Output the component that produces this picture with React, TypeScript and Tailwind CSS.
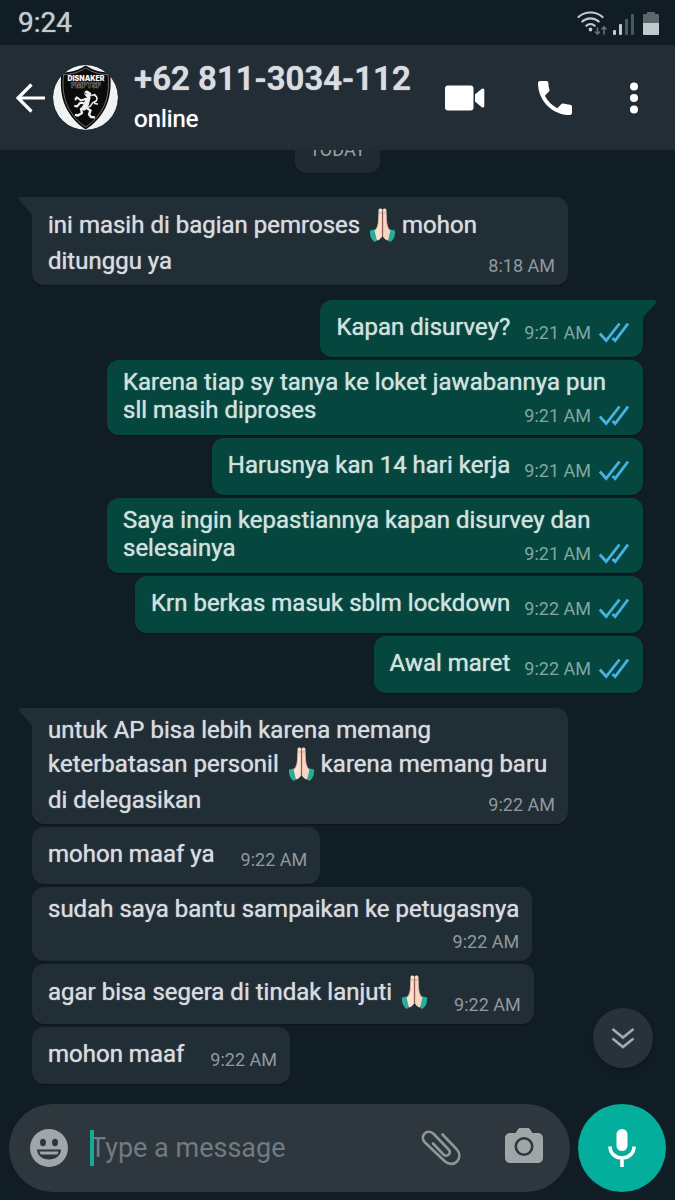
import React, { useState } from 'react';

interface Message {
    id: number;
    text: string;
    time: string;
    mine?: boolean;
    tail?: boolean;
    layout: 'single' | 'overlap' | 'stacked' | 'inline';
}

const groups: Message[][] = [
    [
        { id: 1, text: 'ini masih di bagian pemroses 🙏🏻 mohon\nditunggu ya', time: '8:18 AM', tail: true, layout: 'overlap' },
    ],
    [
        { id: 2, text: 'Kapan disurvey?', time: '9:21 AM', mine: true, tail: true, layout: 'single' },
        { id: 3, text: 'Karena tiap sy tanya ke loket jawabannya pun\nsll masih diproses', time: '9:21 AM', mine: true, layout: 'overlap' },
        { id: 4, text: 'Harusnya kan 14 hari kerja', time: '9:21 AM', mine: true, layout: 'single' },
        { id: 5, text: 'Saya ingin kepastiannya kapan disurvey dan\nselesainya', time: '9:21 AM', mine: true, layout: 'overlap' },
        { id: 6, text: 'Krn berkas masuk sblm lockdown', time: '9:22 AM', mine: true, layout: 'single' },
        { id: 7, text: 'Awal maret', time: '9:22 AM', mine: true, layout: 'single' },
    ],
    [
        { id: 8, text: 'untuk AP bisa lebih karena memang\nketerbatasan personil 🙏🏻 karena memang baru\ndi delegasikan', time: '9:22 AM', tail: true, layout: 'overlap' },
        { id: 9, text: 'mohon maaf ya', time: '9:22 AM', layout: 'single' },
        { id: 10, text: 'sudah saya bantu sampaikan ke petugasnya', time: '9:22 AM', layout: 'stacked' },
        { id: 11, text: 'agar bisa segera di tindak lanjuti 🙏🏻', time: '9:22 AM', layout: 'inline' },
        { id: 12, text: 'mohon maaf', time: '9:22 AM', layout: 'single' },
    ],
];

const layouts = {
    single: 'flex items-end py-[13px]',
    inline: 'flex items-end py-2',
    overlap: 'grid w-full py-2',
    stacked: 'flex flex-col py-2',
};

function PrayingHands() {
    return (
        <svg role="img" aria-label="🙏🏻" viewBox="0 0 30 42" className="inline-block h-[42px] w-[30px] align-[-14px]">
            <path d="M4 25.500l6.500-1.500 3 9L9 37c-3.500-2-5.500-6-5-11.500z" fill="#27ae98" />
            <path d="M29 25.500l-6.500-1.500-3 9L24 37c3.500-2 5.500-6 5-11.500z" fill="#27ae98" />
            <path d="M9 27l3.500 7.500M24 27l-3.500 7.500" stroke="#0c7a6b" strokeWidth="1.400" />
            <path d="M12.600 5c0-2 3.600-2 3.700 0v26c-1.300 2.500-3 4-5.300 4.500L8.500 26c2.500-2.500 3.600-6 3.700-10.500z" fill="#fbdfd0" />
            <path d="M20.400 5c0-2-3.600-2-3.700 0v26c1.300 2.500 3 4 5.300 4.500l2.500-9.500c-2.500-2.500-3.600-6-3.700-10.500z" fill="#f8d6c5" />
            <path d="M16.500 6v25" stroke="#96604f" strokeWidth="1.300" />
            <path d="M12.400 16c-.3 3.500-1 6-2.500 8.500M20.600 16c.3 3.500 1 6 2.500 8.500M12.700 8h3.200M17.100 8h3.200" stroke="#cf9b87" strokeWidth=".8" fill="none" />
        </svg>
    );
}

function MessageText({ text }: { text: string }) {
    return (
        <>
            {text.split('\n').map((line) => (
                <span key={line} className="block w-fit">
                    {line.split('🙏🏻').map((part, index) => (
                        <React.Fragment key={index}>
                            {index > 0 && <PrayingHands />}
                            {part}
                        </React.Fragment>
                    ))}
                </span>
            ))}
        </>
    );
}

function Ticks() {
    return (
        <svg viewBox="0 0 30 22" className="h-[22px] w-[30px]" fill="none" stroke="#45b3e0" strokeWidth="2.800">
            <path d="M.8 11.500l6.400 7L20.500 1.500" />
            <path d="M13.500 16l2.700 2.700L29 1.500" />
        </svg>
    );
}

function Bubble({ message }: { message: Message }) {
    const { text, time, mine, tail, layout } = message;
    const color = mine ? 'self-end bg-[#05473f] pr-[14px] text-[#d0e1de]' : 'self-start bg-[#222e35] pr-[13px] text-[#d6dbdf]';
    const corner = !tail ? '' : mine ? 'rounded-tr-none' : 'rounded-tl-none';
    const spacing = !mine && layout !== 'single' ? 'mb-[2px]' : 'mb-[3px]';
    const gap = mine ? 'gap-x-[14px]' : 'gap-x-[26px]';

    return (
        <div className={`relative max-w-[calc(100%-75px)] rounded-xl pl-4 shadow-[0_1px_1px_rgba(0,0,0,0.3)] ${color} ${corner} ${gap} ${layouts[layout]}`}>
            {tail && !mine && (
                <svg viewBox="0 0 14 20" className="absolute top-0 -left-[13px] h-5 w-[14px]">
                    <path d="M14 0H2C0 0-.5 2 .5 3.500L10 14c2 2 3 3.500 3 6h1z" fill="#222e35" />
                </svg>
            )}
            {tail && mine && (
                <svg viewBox="0 0 14 20" className="absolute top-0 -right-[13px] h-5 w-[14px]">
                    <path d="M0 0h12c2 0 2.500 2 1.500 3.500L4 14c-2 2-3 3.500-3 6H0z" fill="#05473f" />
                </svg>
            )}
            <p className={`col-start-1 row-start-1 text-2xl leading-7 [text-shadow:0_0_1px_currentColor] ${spacing}`}>
                <MessageText text={text} />
            </p>
            <div className={`col-start-1 row-start-1 flex shrink-0 items-end gap-2 self-end justify-self-end ${layout === 'stacked' ? 'pt-[6px]' : ''}`}>
                <time className={`text-lg leading-[22px] ${mine ? 'text-[#82a6a1]' : 'text-[#91999e]'}`}>{time}</time>
                {mine && <Ticks />}
            </div>
        </div>
    );
}

function StatusBar() {
    return (
        <div className="flex h-[45px] items-center justify-between bg-[#101d24] pr-4 pl-[18px]">
            <span className="text-[28px] leading-8 text-[#c3cace] [text-shadow:0_0_1px_currentColor]">9:24</span>
            <div className="flex items-end gap-[6px]">
                <svg viewBox="0 0 30 24" className="h-6 w-[30px]" fill="none" stroke="#c3cace" strokeWidth="2.200" strokeLinecap="round">
                    <path d="M1.500 6c6.500-6 17.500-6 24 0" />
                    <path d="M5.300 10.500c4.500-4.300 11.900-4.300 16.400 0" />
                    <path d="M9.300 14.800c2.400-2.300 6-2.300 8.400 0" />
                    <circle cx="13.500" cy="18.500" r=".8" fill="#c3cace" />
                    <path d="M20.500 17v6M18.500 21l2 2 2-2M27 23v-7M25 18l2-2 2 2" stroke="#67737a" strokeWidth="1.600" />
                </svg>
                <svg viewBox="0 0 21 22" className="h-[22px] w-[21px]">
                    <rect x="0" y="17" width="3" height="5" rx="1" fill="#c3cace" />
                    <rect x="6" y="11" width="3" height="11" rx="1" fill="#c3cace" />
                    <rect x="12" y="6" width="3" height="16" rx="1" fill="#4b585f" />
                    <rect x="18" y="1" width="3" height="21" rx="1" fill="#4b585f" />
                </svg>
                <svg viewBox="0 0 16 23" className="ml-[3px] h-[23px] w-4">
                    <path d="M4 0h8v2h3a1 1 0 0 1 1 1v9H0V3a1 1 0 0 1 1-1h3z" fill="#5c676d" />
                    <path d="M0 11h16v11a1 1 0 0 1-1 1H1a1 1 0 0 1-1-1z" fill="#c3c8ca" />
                </svg>
            </div>
        </div>
    );
}

function Avatar() {
    return (
        <svg viewBox="0 0 65 65" className="h-[65px] w-[65px] shrink-0 rounded-full" role="img" aria-label="Disnaker PMPTSP">
            <circle cx="32.500" cy="32.500" r="32.500" fill="#f1f2f2" />
            <path d="M32.700.5C26 5 18 7.500 8.500 7.500c-1.500 12-.5 24 4 34C17 51 24 59 32.700 64.500 41.500 59 48.500 51 53 41.500c4.500-10 5.500-22 4-34C47.500 7.500 39.500 5 32.700.5z" fill="#0b0b0c" />
            <path d="M32.700 3C26.500 7 19 9.500 10.500 9.600c-1.200 11-.2 22 3.800 31C18.500 49.500 25 57 32.700 62 40.500 57 47 49.500 51.200 40.600c4-9 5-20 3.800-31C46.500 9.500 39 7 32.700 3z" fill="none" stroke="#9b9b9b" strokeWidth=".7" />
            <text x="33" y="15.500" textAnchor="middle" fontFamily="Inter, sans-serif" fontWeight="900" fontSize="7" fill="#f5f5f5">DISNAKER</text>
            <text x="33" y="22.500" textAnchor="middle" fontFamily="Inter, sans-serif" fontWeight="900" fontSize="7" fill="#0b0b0c" stroke="#8a8a8a" strokeWidth=".5">PMPTSP</text>
            <g fill="none" stroke="#eee" strokeLinecap="round" strokeLinejoin="round">
                <path d="M34 28.500l1.500 1" strokeWidth="5.500" />
                <path d="M35 33l-1.500 6-2.500 4" strokeWidth="5" />
                <path d="M32.500 34l-4.500 1.500-4-3M23.500 32.500l-1 2" strokeWidth="2" />
                <path d="M32 38l-5 0-3 3.500-2-.5" strokeWidth="2" />
                <path d="M31 43l-3 1 1 4-4 2.500-2-.5" strokeWidth="2.400" />
                <path d="M33.500 43l4 2.500-1.500 4 2 2.500 3 .3" strokeWidth="2.400" />
                <path d="M34.500 42c5 1 3-4.500 6.500-5s4-5 1-6.500M41.500 38.500l3 .5M42 29.500l-3 1" strokeWidth="1.500" />
            </g>
            <path d="M33.500 28.500l-2.500.5M34 32l-1 1" stroke="#111" strokeWidth=".8" />
        </svg>
    );
}

function Header() {
    return (
        <header className="relative z-10 flex h-[105px] items-center bg-[#232d36] pr-[37px] pl-[15px]">
            <button type="button" aria-label="Back" className="mr-2 shrink-0">
                <svg viewBox="0 0 30 30" className="h-[30px] w-[30px]" fill="none" stroke="#fff" strokeWidth="3.200">
                    <path d="M30 15H3M16.500 1.500L3 15l13.500 13.500" />
                </svg>
            </button>
            <Avatar />
            <div className="ml-4 flex min-w-0 flex-1 flex-col gap-[6px] pb-1">
                <h1 className="truncate text-[33px] leading-10 font-semibold text-[#d9dce0] [text-shadow:0_0_1px_currentColor]">+62 811-3034-112</h1>
                <p className="text-2xl leading-7 text-white [text-shadow:0_0_1px_currentColor]">online</p>
            </div>
            <div className="flex items-center">
                <button type="button" aria-label="Video call" className="mr-[53px]">
                    <svg viewBox="0 0 40 26" className="h-[26px] w-10" fill="#fff">
                        <rect x="0" y="0.500" width="28.500" height="25" rx="3" />
                        <path d="M30 9.500l6.500-5.600c1.200-1 2.800-.5 2.800 1v16.200c0 1.500-1.600 2-2.800 1L30 16.500z" />
                    </svg>
                </button>
                <button type="button" aria-label="Voice call" className="mr-[58px]">
                    <svg viewBox="3 3 18 18" className="h-[34px] w-[34px]" fill="#fff">
                        <path d="M6.620 10.790c1.440 2.830 3.760 5.140 6.590 6.590l2.200-2.200c.27-.27.67-.36 1.020-.24 1.120.37 2.330.57 3.570.57.55 0 1 .45 1 1V20c0 .55-.45 1-1 1-9.390 0-17-7.610-17-17 0-.55.45-1 1-1h3.500c.55 0 1 .45 1 1 0 1.250.2 2.450.57 3.570.11.35.03.74-.25 1.020l-2.200 2.200z" />
                    </svg>
                </button>
                <button type="button" aria-label="More options">
                    <svg viewBox="0 0 8 32" className="h-8 w-2" fill="#fff">
                        <circle cx="4" cy="4.600" r="4" />
                        <circle cx="4" cy="16" r="4" />
                        <circle cx="4" cy="27.400" r="4" />
                    </svg>
                </button>
            </div>
        </header>
    );
}

function Composer() {
    const [value, setValue] = useState('');

    return (
        <form className="flex items-center gap-2 px-[9px] pb-2" onSubmit={(e) => e.preventDefault()}>
            <div className="flex h-[88px] min-w-0 flex-1 items-center rounded-full bg-[#2d373d] pr-[27px] pl-[21px]">
                <button type="button" aria-label="Emoji" className="shrink-0">
                    <svg viewBox="0 0 38 38" className="h-[38px] w-[38px]">
                        <circle cx="19" cy="19" r="19" fill="#a0a6a9" />
                        <ellipse cx="13" cy="13.500" rx="3" ry="3.800" fill="#2d373d" />
                        <ellipse cx="25" cy="13.500" rx="3" ry="3.800" fill="#2d373d" />
                        <path d="M7 20.500h24c0 6-5.500 10-12 10s-12-4-12-10z" fill="#2d373d" />
                        <path d="M9.500 22.500h19c-.2 1.200-.7 2.200-1.400 3H10.900c-.7-.8-1.200-1.800-1.400-3z" fill="#a0a6a9" />
                    </svg>
                </button>
                <div className="relative ml-[22px] flex min-w-0 flex-1 items-center">
                    <input
                        type="text"
                        aria-label="Message"
                        placeholder="Type a message"
                        value={value}
                        onChange={(e) => setValue(e.target.value)}
                        className="w-full bg-transparent text-[27px] leading-9 text-[#d6dbdf] caret-[#14a893] outline-none placeholder:text-[#717b81]"
                    />
                    {value === '' && <span className="pointer-events-none absolute left-0 h-9 w-1 bg-[#14ab96]" />}
                </div>
                <button type="button" aria-label="Attach" className="mr-11 shrink-0">
                    <svg viewBox="0 0 40 36" className="h-9 w-10" fill="none" stroke="#8d969b" strokeWidth="2.600" strokeLinecap="round">
                        <path d="M21.500 4.500l14 14.500c3.500 4 3.800 9 .5 12.500s-9 3-12.500-.5L4 12.500c-3-3-2.800-6.500-.3-9s6.300-2.300 9 .5l14.500 15c2 2 1.900 4.200.4 5.700s-3.600 1.300-5.600-.7L12 13.500" />
                    </svg>
                </button>
                <button type="button" aria-label="Camera" className="shrink-0">
                    <svg viewBox="0 0 38 40" className="h-10 w-[38px]">
                        <path d="M13 1.200C13.500.4 14.200 0 15 0h8c.8 0 1.500.4 2 1.200L27.500 5H33c2.800 0 5 2.200 5 5v20c0 2.800-2.200 5-5 5H5c-2.800 0-5-2.200-5-5V10c0-2.800 2.200-5 5-5h5.500z" fill="#a0a5a7" />
                        <circle cx="19" cy="18.500" r="8.200" fill="#a0a5a7" stroke="#2d373d" strokeWidth="2.600" />
                    </svg>
                </button>
            </div>
            <button type="button" aria-label="Record voice message" className="flex h-[88px] w-[88px] shrink-0 items-center justify-center rounded-full bg-[#03ae9c]">
                <svg viewBox="0 0 28 40" className="h-10 w-7">
                    <rect x="8.500" y="1" width="11" height="22" rx="5.500" fill="#fff" />
                    <path d="M2 18.500c0 7 5.500 11.500 12 11.500s12-4.500 12-11.500M14 30v9" fill="none" stroke="#fff" strokeWidth="3.600" />
                </svg>
            </button>
        </form>
    );
}

export default function App() {
    return (
        <div className="flex min-h-screen flex-col bg-[#101d24] font-['Roboto','Noto_Sans',sans-serif]">
            <StatusBar />
            <Header />
            <main className="relative flex-1 overflow-hidden px-8 pb-4">
                {/* date chip is half scrolled under the header */}
                <div className="-mt-[19px] mb-6 flex justify-center">
                    <span className="rounded-xl bg-[#1f2b31] px-[14px] pt-2 pb-[13px] text-lg leading-[21px] text-[#9ba2a6]">TODAY</span>
                </div>
                <div className="flex flex-col gap-[15px]">
                    {groups.map((group, index) => (
                        <div key={index} className="flex flex-col gap-[3px]">
                            {group.map((message) => (
                                <Bubble key={message.id} message={message} />
                            ))}
                        </div>
                    ))}
                </div>
                <button type="button" aria-label="Scroll to bottom" className="absolute right-[22px] bottom-9 flex h-[60px] w-[60px] items-center justify-center rounded-full bg-[#27323a] shadow-md">
                    <svg viewBox="0 0 24 22" className="h-[22px] w-6" fill="none" stroke="#a3abb0" strokeWidth="2.600">
                        <path d="M1.500 2L12 10.500 22.500 2M1.500 11.500L12 20l10.500-8.500" />
                    </svg>
                </button>
            </main>
            <Composer />
        </div>
    );
}
